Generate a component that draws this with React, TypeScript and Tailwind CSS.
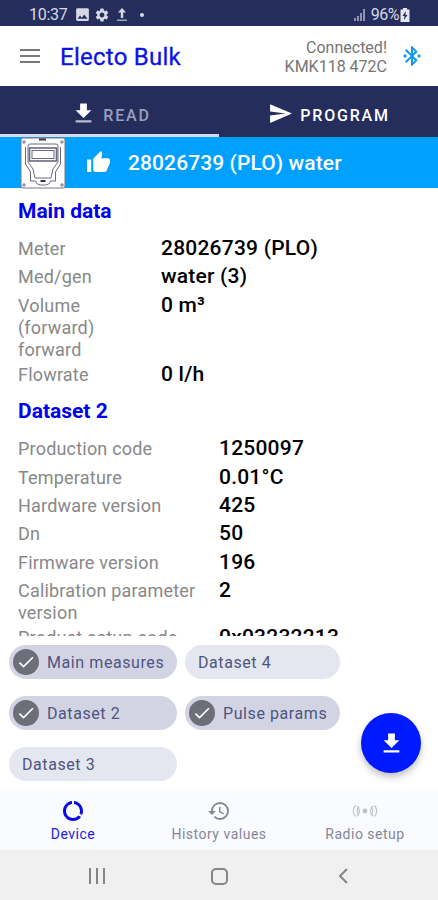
import { MdBluetoothConnected, MdCheck, MdDataUsage, MdHistory, MdImage, MdSend, MdSettings, MdThumbUp } from 'react-icons/md';

const mainData = [
  { label: "Meter", value: "28026739 (PLO)" },
  { label: "Med/gen", value: "water (3)" },
  { label: "Volume (forward) forward", value: "0 m³" },
  { label: "Flowrate", value: "0 l/h" },
];

const dataset2 = [
  { label: "Production code", value: "1250097" },
  { label: "Temperature", value: "0.01°C" },
  { label: "Hardware version", value: "425" },
  { label: "Dn", value: "50" },
  { label: "Firmware version", value: "196" },
  { label: "Calibration parameter version", value: "2" },
  { label: "Product setup code", value: "0x03232213" },
];

const chips = [
  { label: "Main measures", checked: true },
  { label: "Dataset 4", checked: false },
  { label: "Dataset 2", checked: true },
  { label: "Pulse params", checked: true },
  { label: "Dataset 3", checked: false },
];

const DownloadIcon = ({ className, bar = "#fff" }: { className: string; bar?: string }) => (
  <svg viewBox="0 0 24 24" className={className}>
    <path d="M19 9h-4V3H9v6H5l7 7 7-7z" fill="#fff" />
    <path d="M5 18h14v2H5z" fill={bar} />
  </svg>
);

const MeterIcon = () => (
  <svg viewBox="0 0 46 52" className="h-[52px] w-[46px]" fill="none" stroke="#6a6a80" strokeWidth="1">
    <rect x="1" y="1" width="44" height="50" rx="2" fill="#fff" stroke="#77778c" />
    <path d="M8 25V9q0-2 2-2h26q2 0 2 2v16l-5 7-2 9H15l-2-9z" />
    <path d="M5.500 10v17l5 8v9M40.500 10v17l-5 8v9" />
    <rect x="9.500" y="11" width="27" height="13" strokeWidth="1.6" />
    <rect x="12" y="13.500" width="22" height="8" />
    <path d="M10.500 44h5q1 4 5 4h5q4 0 5-4h5" />
    <path d="M19 2.500h7M20.500 44h5" stroke="#333448" strokeWidth="2" />
    <circle cx="4" cy="5" r="1.200" />
    <circle cx="42" cy="5" r="1.200" />
    <circle cx="4" cy="48" r="1.200" />
    <circle cx="42" cy="48" r="1.200" />
  </svg>
);

const StatusBar = () => (
  <div className="flex h-[26px] shrink-0 items-center bg-[#252d5c] pt-[3px] pr-[28px] pl-[29px] text-[16px] text-[#d5d8e6]">
    <span className="w-[45px] tracking-[-0.3px]">10:37</span>
    <MdImage className="h-[17px] w-[17px]" />
    <MdSettings className="ml-[3px] h-4 w-4" />
    <svg viewBox="0 0 12 14" className="ml-[6px] h-[14px] w-3" fill="currentColor">
      <path d="M6 0l4 4.500H7.200V10H4.800V4.500H2z" />
      <path d="M1 11.500h10V13H1z" opacity=".7" />
    </svg>
    <span className="ml-3 h-1 w-1 rounded-full bg-[#d5d8e6]" />
    <svg viewBox="0 0 12 12" className="ml-auto h-3 w-3" fill="#8f94b2">
      <path d="M0 9h2v3H0zM3 7h2v5H3zM6 4h2v8H6zM9 0h2v12H9z" />
    </svg>
    <span className="ml-[5px] tracking-[-0.5px]">96%</span>
    <svg viewBox="0 0 10 14" className="ml-px h-[14px] w-[10px]" fill="#e6e8f0">
      <path d="M3 0h4v1.500h2.500V14H.5V1.500H3z" />
      <path d="M5.800 3L2.500 8h2L4 12l3.500-5h-2z" fill="#252d5c" />
    </svg>
  </div>
);

const Section = ({ title, rows, labelClass }: { title: string; rows: { label: string; value: string }[]; labelClass: string }) => (
  <section>
    <h2 className="h-9 text-[21px] leading-6 font-bold text-[#0000f0]">{title}</h2>
    {rows.map((row) => (
      <div key={row.label} className="flex min-h-[28.400px]">
        <div className={labelClass}>{row.label}</div>
        <div className="text-[21px] leading-[27px] font-medium tracking-[0.220px] whitespace-nowrap text-black">{row.value}</div>
      </div>
    ))}
  </section>
);

const App = () => {
  return (
    <div className="flex h-[900px] w-[438px] flex-col overflow-hidden bg-white font-[Roboto,sans-serif]">
      <StatusBar />

      {/* Header */}
      <header className="flex h-[60px] shrink-0 items-center pr-[14px] pl-5">
        <div className="flex w-5 flex-col gap-[4px]">
          <span className="h-[2px] bg-[#777]" />
          <span className="h-[2px] bg-[#777]" />
          <span className="h-[2px] bg-[#777]" />
        </div>
        <h1 className="ml-5 pt-[2px] text-[24px] tracking-[0.250px] text-[#0d14e6] [-webkit-text-stroke:0.3px]">Electo Bulk</h1>
        <div className="ml-auto pt-[2px] text-right text-[16px] leading-[19px] text-[#757575]">
          <div>Connected!</div>
          <div>KMK118 472C</div>
        </div>
        <MdBluetoothConnected className="ml-[13px] h-6 w-6 text-[#1299f5]" />
      </header>

      {/* Tabs */}
      <div className="flex h-[51px] shrink-0 bg-[#252d5c] text-[16px] font-medium tracking-[1.800px]">
        <div className="flex w-[219px] items-center justify-center border-b-[3px] border-[#d6d9ea] pt-[7px] pl-[2px] text-[#9a9fbe]">
          <DownloadIcon className="mr-[6px] h-[27px] w-[27px]" bar="#b9bdd0" />
          <span className="pt-[5px]">READ</span>
        </div>
        <div className="flex w-[219px] items-center justify-center pt-[6px] pb-[2px] pl-px text-white">
          <MdSend className="mr-[7px] h-[25px] w-[25px]" />
          <span className="pt-[5px]">PROGRAM</span>
        </div>
      </div>

      <div className="flex h-[51px] shrink-0 items-center bg-[#00a0ff] pl-5 text-[21px] font-medium text-white">
        <MeterIcon />
        <MdThumbUp className="ml-5 h-[25px] w-[25px]" />
        <span className="ml-[17px] pt-[2px] tracking-[0.1px]">28026739 (PLO) water</span>
      </div>

      {/* Readings */}
      <main className="h-[448px] shrink-0 overflow-hidden pt-[11px] pl-[18px] text-[18px] text-[#888]">
        <Section title="Main data" rows={mainData} labelClass="w-[143px] pt-[3px] pr-10 leading-[22px] tracking-[0.2px]" />
        <div className="h-[10px]" />
        <Section title="Dataset 2" rows={dataset2} labelClass="w-[201px] pt-[3px] pr-4 leading-[22px] tracking-[0.2px]" />
      </main>

      <div className="relative h-[153px] shrink-0 pt-[9px] pl-[9px]">
        <div className="grid grid-cols-[168px_155px] gap-x-[8px] gap-y-[17px]">
          {chips.map((chip) => (
            <div
              key={chip.label}
              className={`flex h-[34px] items-center rounded-full text-[16px] tracking-[0.580px] text-[#4e5580] ${chip.checked ? "bg-[#d3d4e3] pl-[4px]" : "bg-[#e4e6f0] pl-[13px]"}`}
            >
              {chip.checked && (
                <span className="mr-[8px] flex h-[26px] w-[26px] items-center justify-center rounded-full bg-[#6d6e78]">
                  <MdCheck className="h-5 w-5 text-white" />
                </span>
              )}
              <span className="pt-[2px]">{chip.label}</span>
            </div>
          ))}
        </div>
        <button className="absolute top-[77px] left-[361px] flex h-[60px] w-[60px] items-center justify-center rounded-full bg-[#001aff] shadow-[0_4px_7px_rgba(0,0,0,0.25)]">
          <DownloadIcon className="h-[27px] w-[27px]" />
        </button>
      </div>

      {/* Bottom navigation */}
      <nav className="grid h-[61px] shrink-0 grid-cols-[146px_146px_146px] bg-[#f9fbff] pt-[10px] text-[14px] tracking-[0.500px] text-[#858699]">
        <div className="flex flex-col items-center gap-px text-[#1b22dc]">
          <MdDataUsage className="h-6 w-6 text-[#0808e8]" />
          <span>Device</span>
        </div>
        <div className="flex flex-col items-center gap-px">
          <MdHistory className="h-6 w-6" />
          <span>History values</span>
        </div>
        <div className="flex flex-col items-center gap-px">
          <svg viewBox="0 0 28 24" className="h-6 w-7" fill="none" stroke="#c3c4ca" strokeWidth="1.200">
            <path d="M4.500 6.500q-4.500 5.500 0 11M8 8q-3.500 4 0 8M6 7q5 5 0 10M23.500 6.500q4.500 5.500 0 11M20 8q3.500 4 0 8M22 7q-5 5 0 10" />
            <circle cx="14" cy="12" r="1.800" fill="#b9bac2" />
          </svg>
          <span>Radio setup</span>
        </div>
      </nav>

      <div className="flex grow items-center bg-[#f0f0f0] pt-[2px] text-[#858585]">
        <div className="ml-[89px] flex h-4 w-4 justify-between">
          <span className="w-[2px] bg-current" />
          <span className="w-[2px] bg-current" />
          <span className="w-[2px] bg-current" />
        </div>
        <div className="ml-[106px] h-[17px] w-[17px] rounded-[5px] border-2 border-current" />
        <svg viewBox="0 0 10 16" className="ml-[110px] h-4 w-[10px]" fill="none" stroke="currentColor" strokeWidth="2">
          <path d="M9 1L2 8l7 7" />
        </svg>
      </div>
    </div>
  );
};

export default App;
